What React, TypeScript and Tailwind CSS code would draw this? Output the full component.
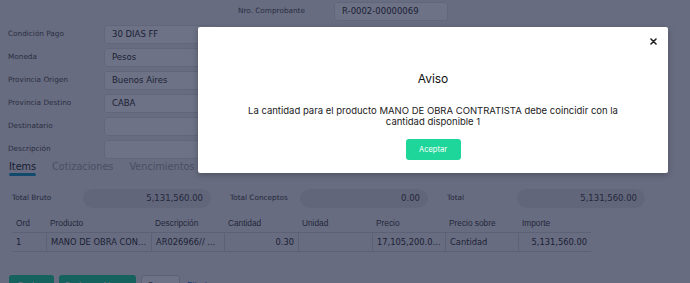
import React from "react";

const labelCls = "w-24 shrink-0 text-[7.3px] text-[#555] font-['DejaVu_Sans',sans-serif]";
const inputCls =
  "w-[114px] h-[19px] shrink-0 rounded-[3px] border border-[#e2e2e2] bg-white pl-[7px] flex items-center text-[8.5px] text-[#333] font-['DejaVu_Sans',sans-serif]";

function Field({ label, value }: { label: string; value?: string }) {
  return (
    <div className="flex items-center h-[19px]">
      <div className={labelCls}>{label}</div>
      <div className={inputCls}>{value}</div>
    </div>
  );
}

function Total({ label, value, labelW }: { label: string; value: string; labelW: string }) {
  return (
    <div className="flex items-center">
      <div className={`${labelW} text-[7.3px] text-[#444] font-['DejaVu_Sans',sans-serif]`}>{label}</div>
      <div className="w-[128px] h-[19px] rounded-full bg-[#e2e2e2] flex items-center justify-end pr-2 text-[8.5px] text-[#444] font-['DejaVu_Sans',sans-serif]">
        {value}
      </div>
    </div>
  );
}

const cols = [
  { h: "Ord", w: "w-[34px]" },
  { h: "Producto", w: "w-[105px]" },
  { h: "Descripción", w: "w-[73px]" },
  { h: "Cantidad", w: "w-[74px]" },
  { h: "Unidad", w: "w-[74px]" },
  { h: "Precio", w: "w-[73px]" },
  { h: "Precio sobre", w: "w-[73px]" },
  { h: "Importe", w: "w-[74px]" },
];

const cell = "shrink-0 px-[4px] flex items-center border-l border-[#d4d4d4] overflow-hidden";

export default function App() {
  return (
    <div className="relative w-[690px] h-[283px] overflow-hidden bg-[#f0f0f0]">
      {/* Page */}
      <div className="pl-2 pt-[2px] grid grid-cols-[210px_210px] gap-x-5 gap-y-1">
        <div />
        <Field label="Nro. Comprobante" value="R-0002-00000069" />
        <Field label="Condición Pago" value="30 DIAS FF" />
        <div />
        <Field label="Moneda" value="Pesos" />
        <div />
        <Field label="Provincia Origen" value="Buenos Aires" />
        <div />
        <Field label="Provincia Destino" value="CABA" />
        <div />
        <Field label="Destinatario" />
        <div />
        <Field label="Descripción" />
        <div />
      </div>

      {/* Tabs */}
      <div className="mt-[2px] pl-[9px] flex items-start gap-4 text-[9.7px] font-['DejaVu_Sans',sans-serif] leading-[12px]">
        <div className="flex flex-col">
          <span className="text-[#2a2a2a]">Items</span>
          <span className="h-[3px] bg-[#1a9bc4] rounded-full" />
        </div>
        <span className="text-[#a3a6ad]">Cotizaciones</span>
        <span className="text-[#a3a6ad]">Vencimientos</span>
      </div>

      {/* Totals */}
      <div className="mt-[13px] pl-3 flex gap-[19px]">
        <Total label="Total Bruto" value="5,131,560.00" labelW="w-[71px]" />
        <Total label="Total Conceptos" value="0.00" labelW="w-[70px]" />
        <Total label="Total" value="5,131,560.00" labelW="w-[70px]" />
      </div>

      {/* Table */}
      <div className="mt-[7px] ml-3 w-[579px]">
        <div className="flex h-[18px] items-center border-b border-[#d4d4d4] text-[8.3px] text-[#444] font-['Liberation_Sans',sans-serif]">
          {cols.map((c) => (
            <div key={c.h} className={`${c.w} shrink-0 px-[4px]`}>
              {c.h}
            </div>
          ))}
        </div>
        <div className="flex h-[19px] border-b border-[#d4d4d4] text-[8.3px] text-[#333] font-['DejaVu_Sans',sans-serif] whitespace-nowrap">
          <div className="w-[34px] shrink-0 px-[4px] flex items-center">1</div>
          <div className={`w-[105px] ${cell}`}>
            <span className="truncate">MANO DE OBRA CONTRATISTA</span>
          </div>
          <div className={`w-[73px] ${cell}`}>
            <span className="truncate">AR026966// ...</span>
          </div>
          <div className={`w-[74px] ${cell} justify-end`}>0.30</div>
          <div className={`w-[74px] ${cell}`} />
          <div className={`w-[73px] ${cell}`}>
            <span className="truncate">17,105,200.0...</span>
          </div>
          <div className={`w-[73px] ${cell}`}>Cantidad</div>
          <div className={`w-[74px] ${cell} justify-end pr-[5px]`}>5,131,560.00</div>
        </div>
      </div>

      {/* Action buttons */}
      <div className="mt-[23px] pl-[9px] flex items-start gap-[5px] text-[9px] font-['Inter',sans-serif]">
        <div className="w-[45px] h-[22px] rounded-[3px] bg-[#22d69c] text-white flex items-center justify-center">Grabar</div>
        <div className="w-[77px] h-[22px] rounded-[3px] bg-[#22d69c] text-white flex items-center justify-center">Grabar y Nuevo</div>
        <div className="w-[39px] h-[22px] rounded-[3px] border border-[#cfd3da] bg-white text-[#555] flex items-center justify-center">Cerrar</div>
        <div className="ml-[2px] h-[22px] flex items-center text-[#2a7fd4]">Eliminar</div>
      </div>

      {/* Overlay */}
      <div className="absolute inset-0 bg-[rgba(13,20,53,0.6)]" />

      {/* Modal */}
      <div className="absolute left-[198px] top-[27px] w-[470px] h-[146px] bg-white rounded-[2px] shadow-[0_2px_6px_rgba(0,0,0,0.25)] flex flex-col items-center pt-[44px] font-['Inter',sans-serif]">
        <button className="absolute right-[10px] top-[9px] w-[10px] h-[10px] flex items-center justify-center">
          <svg width="7" height="7" viewBox="0 0 7 7">
            <path d="M1 1L6 6M6 1L1 6" stroke="#222" strokeWidth="1.6" strokeLinecap="round" />
          </svg>
        </button>
        <div className="text-[12px] leading-[16px] text-[#111]">Aviso</div>
        <div className="mt-[18px] px-[40px] text-center text-[9.5px] leading-[11px] text-[#222]">
          La cantidad para el producto MANO DE OBRA CONTRATISTA debe coincidir con la cantidad disponible 1
        </div>
        <div className="mt-[12px] w-[55px] h-[21px] rounded-[3px] bg-[#1fd69a] text-white text-[7.5px] flex items-center justify-center">
          Aceptar
        </div>
      </div>
    </div>
  );
}
